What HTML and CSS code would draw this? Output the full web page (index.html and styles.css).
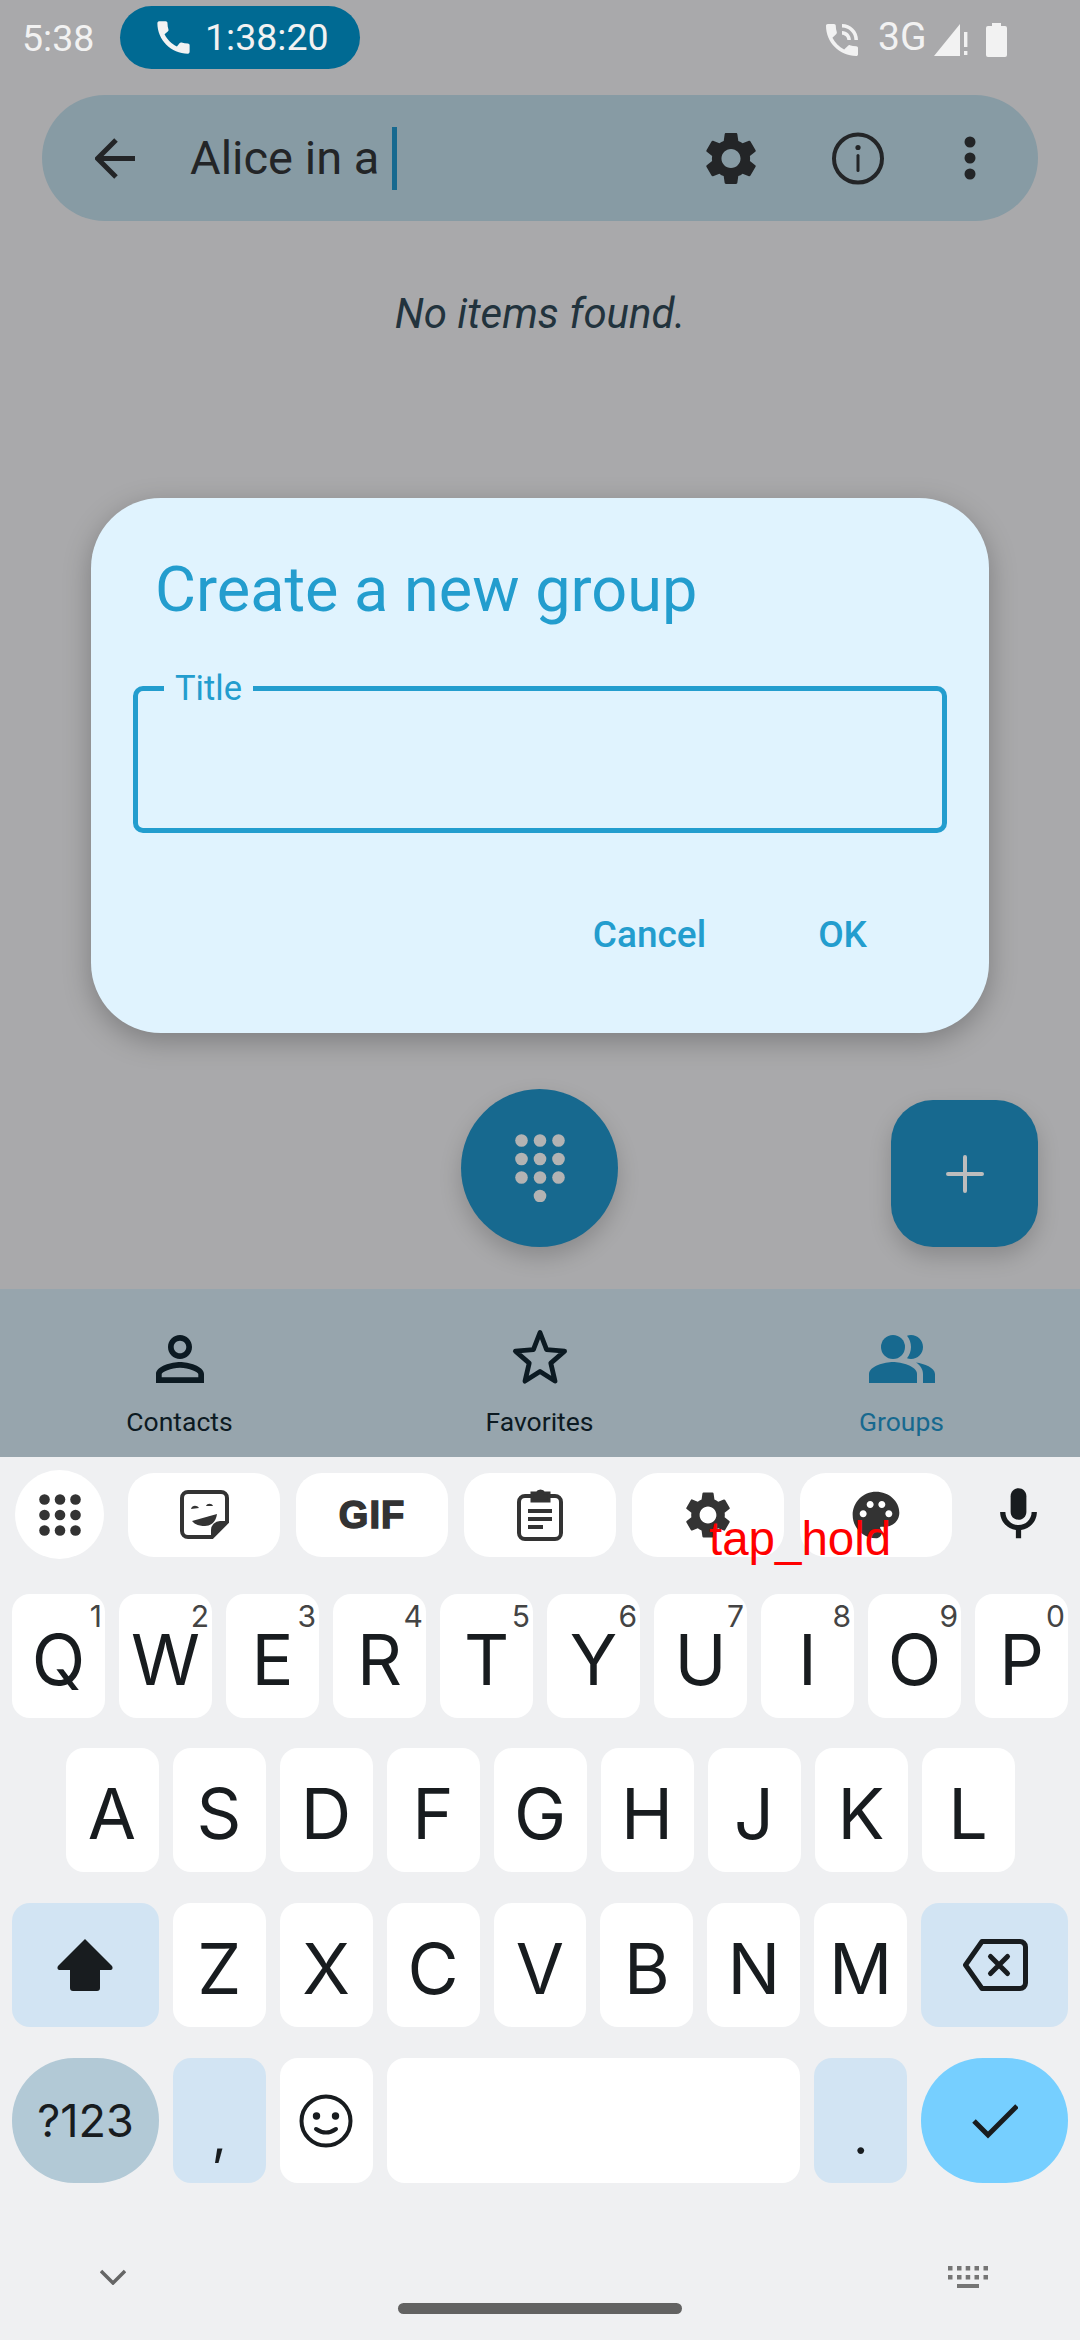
FILE: index.html
```html
<!DOCTYPE html>
<html lang="en">
<head>
<meta charset="utf-8">
<title>Create a new group</title>
<link rel="stylesheet" href="styles.css">
</head>
<body>
<div class="screen">
  <div class="app">
    <div class="status">
      <span class="clock">5:38</span>
      <div class="call-pill">
        <svg class="call-icon" viewBox="0 0 24 24"><path d="M20.01 15.38c-1.23 0-2.42-.2-3.53-.56-.35-.12-.74-.03-1.01.24l-1.57 1.97c-2.83-1.35-5.48-3.9-6.89-6.83l1.95-1.66c.27-.28.35-.67.24-1.02-.37-1.11-.56-2.3-.56-3.53 0-.54-.45-.99-.99-.99H4.19C3.65 3 3 3.24 3 3.99 3 13.28 10.73 21 20.01 21c.71 0 .99-.63.99-1.18v-3.45c0-.54-.45-.99-.99-.99z"/></svg>
        <span>1:38:20</span>
      </div>
      <div class="status-right">
        <svg class="st-phone" viewBox="3 3 18 18"><path d="M15 12h2c0-2.76-2.24-5-5-5v2c1.66 0 3 1.34 3 3zm4 0h2c0-4.97-4.03-9-9-9v2c3.87 0 7 3.13 7 7zm1 3.5c-1.25 0-2.45-.2-3.57-.57-.35-.11-.74-.03-1.02.24l-2.2 2.2c-2.83-1.44-5.15-3.75-6.59-6.59l2.2-2.21c.28-.26.36-.65.25-1C8.7 6.45 8.5 5.25 8.5 4c0-.55-.45-1-1-1H4c-.55 0-1 .45-1 1 0 9.39 7.61 17 17 17 .55 0 1-.45 1-1v-3.5c0-.55-.45-1-1-1z"/></svg>
        <span class="st-net">3G</span>
        <svg class="st-signal" viewBox="0 0 34 32"><path d="M26 0V32H0z"/><rect x="30" y="8" width="3.4" height="15"/><rect x="30" y="27" width="3.4" height="4"/></svg>
        <svg class="st-battery" viewBox="0 0 21 34"><path d="M6 0h9v3h4a2 2 0 0 1 2 2v27a2 2 0 0 1-2 2H2a2 2 0 0 1-2-2V5a2 2 0 0 1 2-2h4z"/></svg>
      </div>
    </div>

    <div class="search">
      <svg class="back" viewBox="0 0 41 41"><path d="M40 20.500H3M21 2 2.500 20.500 21 39"/></svg>
      <span class="query">Alice in a</span><span class="caret"></span>
      <span class="grow"></span>
      <svg class="gear" viewBox="2.400 2 19.200 20"><path d="M19.140 12.940c.04-.3.06-.61.06-.94 0-.32-.02-.64-.07-.94l2.030-1.580c.18-.14.23-.41.12-.61l-1.920-3.320c-.12-.22-.37-.29-.59-.22l-2.390.96c-.5-.38-1.030-.7-1.620-.94l-.36-2.540c-.04-.24-.24-.41-.48-.41h-3.840c-.24 0-.43.17-.47.41l-.36 2.540c-.59.24-1.130.57-1.620.94l-2.390-.96c-.22-.08-.47 0-.59.22L2.740 8.870c-.12.21-.08.47.12.61l2.030 1.580c-.05.3-.09.63-.09.94s.02.64.07.94l-2.030 1.580c-.18.14-.23.41-.12.61l1.920 3.320c.12.22.37.29.59.22l2.390-.96c.5.38 1.030.7 1.620.94l.36 2.540c.05.24.24.41.48.41h3.840c.24 0 .44-.17.47-.41l.36-2.540c.59-.24 1.130-.56 1.620-.94l2.390.96c.22.08.47 0 .59-.22l1.920-3.320c.12-.22.07-.47-.12-.61l-2.010-1.580zM12 15.600c-1.980 0-3.600-1.620-3.600-3.600s1.620-3.600 3.600-3.600 3.600 1.620 3.600 3.600-1.620 3.600-3.600 3.600z"/></svg>
      <svg class="info" viewBox="0 0 52 53"><circle cx="26" cy="26.500" r="24" fill="none" stroke="#232527" stroke-width="4"/><circle cx="26" cy="15.500" r="2.600"/><rect x="24.500" y="22" width="3" height="18" rx="1.500"/></svg>
      <svg class="more" viewBox="0 0 12 44"><circle cx="6" cy="6" r="5.500"/><circle cx="6" cy="22" r="5.500"/><circle cx="6" cy="38" r="5.500"/></svg>
    </div>

    <p class="empty">No items found.</p>

    <div class="fabs">
      <div class="fab fab-round">
        <svg class="dial" viewBox="0 0 50 68"><g fill="#b3b3b3"><circle cx="6.500" cy="6.500" r="6.300"/><circle cx="25" cy="6.500" r="6.300"/><circle cx="43.500" cy="6.500" r="6.300"/><circle cx="6.500" cy="25" r="6.300"/><circle cx="25" cy="25" r="6.300"/><circle cx="43.500" cy="25" r="6.300"/><circle cx="6.500" cy="43.500" r="6.300"/><circle cx="25" cy="43.500" r="6.300"/><circle cx="43.500" cy="43.500" r="6.300"/><circle cx="25" cy="62" r="6.300"/></g></svg>
      </div>
      <div class="fab fab-square">
        <svg class="plus" viewBox="0 0 38 38"><path d="M19 2V36M2 19H36"/></svg>
      </div>
    </div>

    <nav class="tabs">
      <div class="tab">
        <svg class="tab-icon" viewBox="0 0 24 24"><path d="M12 5.900c1.160 0 2.100.94 2.100 2.100s-.94 2.100-2.100 2.100S9.900 9.160 9.900 8s.94-2.100 2.100-2.100m0 9c2.970 0 6.100 1.460 6.100 2.100v1.100H5.900V17c0-.64 3.130-2.100 6.100-2.100M12 4C9.790 4 8 5.790 8 8s1.790 4 4 4 4-1.790 4-4-1.790-4-4-4zm0 9c-2.670 0-8 1.340-8 4v3h16v-3c0-2.660-5.330-4-8-4z"/></svg>
        <span>Contacts</span>
      </div>
      <div class="tab">
        <svg class="tab-icon star" viewBox="0 0 24 24"><path d="M12 3.500 14.200 9.200 20.200 9.700 15.600 13.700 17 19.700 12 16.500 7 19.700 8.400 13.700 3.800 9.700 9.800 9.200z"/></svg>
        <span>Favorites</span>
      </div>
      <div class="tab tab-on">
        <svg class="tab-icon" viewBox="0 0 24 24"><path d="M16.670 13.130C18.040 14.060 19 15.320 19 17v3h4v-3c0-2.180-3.570-3.470-6.330-3.870z"/><path d="M15 12c2.210 0 4-1.790 4-4s-1.790-4-4-4c-.47 0-.91.1-1.330.24C14.500 5.270 15 6.580 15 8s-.5 2.730-1.330 3.760c.42.14.86.24 1.330.24z"/><circle cx="9" cy="8" r="4"/><path d="M9 13c-2.670 0-8 1.340-8 4v3h16v-3c0-2.660-5.330-4-8-4z"/></svg>
        <span>Groups</span>
      </div>
    </nav>

    <div class="dialog">
      <h1 class="dialog-title">Create a new group</h1>
      <fieldset class="field"><legend>Title</legend></fieldset>
      <div class="actions"><span>Cancel</span><span>OK</span></div>
    </div>
  </div>

  <div class="keyboard">
    <div class="toolbar">
      <div class="tool-round">
        <svg class="grid9" viewBox="0 0 42 42"><g fill="#333"><circle cx="5.500" cy="5.500" r="5.300"/><circle cx="21" cy="5.500" r="5.300"/><circle cx="36.500" cy="5.500" r="5.300"/><circle cx="5.500" cy="21" r="5.300"/><circle cx="21" cy="21" r="5.300"/><circle cx="36.500" cy="21" r="5.300"/><circle cx="5.500" cy="36.500" r="5.300"/><circle cx="21" cy="36.500" r="5.300"/><circle cx="36.500" cy="36.500" r="5.300"/></g></svg>
      </div>
      <div class="chip">
        <svg class="ic-sticker" viewBox="0 0 49 49"><path d="M8 2h33a6 6 0 0 1 6 6v24L32 47H8a6 6 0 0 1-6-6V8a6 6 0 0 1 6-6z" fill="none" stroke="#333" stroke-width="4"/><path d="M47 31h-7a9 9 0 0 0-9 9v7z" fill="#333"/><path d="M11 19c1-4 6-4 8-1z M26 16c1-3 6-3 7 0z M12 31l25-7c-1 8-6 12-12 12-5 0-10-1-13-5z" fill="#333"/></svg>
      </div>
      <div class="chip"><span class="gif">GIF</span></div>
      <div class="chip">
        <svg class="ic-clip" viewBox="0 0 46 52"><path d="M8 7h30a6 6 0 0 1 6 6v31a6 6 0 0 1-6 6H8a6 6 0 0 1-6-6V13a6 6 0 0 1 6-6z" fill="none" stroke="#333" stroke-width="4"/><path d="M15 4h5a4 4 0 0 1 7 0h5v8H15z" fill="#333" stroke="#333" stroke-width="3"/><rect x="11" y="20" width="24" height="4" fill="#333"/><rect x="11" y="28" width="24" height="4" fill="#333"/><rect x="11" y="36" width="15" height="4" fill="#333"/></svg>
      </div>
      <div class="chip">
        <svg class="ic-settings" viewBox="0 0 24 24"><path d="M19.140 12.940c.04-.3.06-.61.06-.94 0-.32-.02-.64-.07-.94l2.030-1.580c.18-.14.23-.41.12-.61l-1.920-3.320c-.12-.22-.37-.29-.59-.22l-2.390.96c-.5-.38-1.030-.7-1.620-.94l-.36-2.540c-.04-.24-.24-.41-.48-.41h-3.840c-.24 0-.43.17-.47.41l-.36 2.540c-.59.24-1.130.57-1.620.94l-2.390-.96c-.22-.08-.47 0-.59.22L2.740 8.870c-.12.21-.08.47.12.61l2.030 1.580c-.05.3-.09.63-.09.94s.02.64.07.94l-2.030 1.580c-.18.14-.23.41-.12.61l1.920 3.320c.12.22.37.29.59.22l2.390-.96c.5.38 1.030.7 1.620.94l.36 2.540c.05.24.24.41.48.41h3.840c.24 0 .44-.17.47-.41l.36-2.540c.59-.24 1.130-.56 1.620-.94l2.390.96c.22.08.47 0 .59-.22l1.920-3.320c.12-.22.07-.47-.12-.61l-2.010-1.580zM12 15.600c-1.980 0-3.600-1.620-3.600-3.600s1.620-3.600 3.600-3.600 3.600 1.620 3.600 3.600-1.620 3.600-3.600 3.600z"/></svg>
      </div>
      <div class="chip">
        <svg class="ic-settings" viewBox="0 0 24 24"><path d="M12 2C6.490 2 2 6.490 2 12s4.490 10 10 10c1.380 0 2.500-1.120 2.500-2.500 0-.61-.23-1.200-.64-1.670-.08-.1-.13-.21-.13-.33 0-.28.22-.5.5-.5H16c3.310 0 6-2.690 6-6 0-4.960-4.490-9-10-9zm5.500 11c-.83 0-1.500-.67-1.500-1.500s.67-1.500 1.500-1.500 1.500.67 1.500 1.500-.67 1.500-1.500 1.500zm-3-4c-.83 0-1.500-.67-1.500-1.500S13.670 6 14.500 6s1.500.67 1.500 1.500S15.330 9 14.500 9zM5 11.500c0-.83.67-1.500 1.500-1.500s1.500.67 1.500 1.500S7.330 13 6.500 13 5 12.330 5 11.500zm6-4c0 .83-.67 1.500-1.500 1.500S8 8.330 8 7.500 8.670 6 9.500 6s1.500.67 1.500 1.500z"/></svg>
      </div>
      <svg class="ic-mic" viewBox="0 0 24 24"><path d="M12 14c1.660 0 3-1.340 3-3V5c0-1.660-1.340-3-3-3S9 3.340 9 5v6c0 1.660 1.340 3 3 3z"/><path d="M17 11c0 2.760-2.240 5-5 5s-5-2.240-5-5H5c0 3.530 2.610 6.430 6 6.920V21h2v-3.080c3.390-.49 6-3.390 6-6.920h-2z"/></svg>
      <span class="tap-hold">tap_hold</span>
    </div>

    <div class="row row-1">
      <div class="key"><i>1</i>Q</div><div class="key"><i>2</i>W</div><div class="key"><i>3</i>E</div><div class="key"><i>4</i>R</div><div class="key"><i>5</i>T</div><div class="key"><i>6</i>Y</div><div class="key"><i>7</i>U</div><div class="key"><i>8</i>I</div><div class="key"><i>9</i>O</div><div class="key"><i>0</i>P</div>
    </div>
    <div class="row row-2">
      <div class="key">A</div><div class="key">S</div><div class="key">D</div><div class="key">F</div><div class="key">G</div><div class="key">H</div><div class="key">J</div><div class="key">K</div><div class="key">L</div>
    </div>
    <div class="row row-3">
      <div class="key key-wide key-mod">
        <svg class="ic-shift" viewBox="0 0 56 52"><path d="M28 0 55 27q1.500 3-1 4H43v18q0 3-3 3H16q-3 0-3-3V31H2q-2.500-1-1-4z"/></svg>
      </div>
      <div class="key">Z</div><div class="key">X</div><div class="key">C</div><div class="key">V</div><div class="key">B</div><div class="key">N</div><div class="key">M</div>
      <div class="key key-wide key-mod">
        <svg class="ic-del" viewBox="0 0 66 52"><path d="M20 2.500H58a5.500 5.500 0 0 1 5.500 5.500V44a5.500 5.500 0 0 1-5.500 5.500H20L3.500 26z" fill="none" stroke="#181c1f" stroke-width="5" stroke-linejoin="round"/><path d="M28.500 17.500 45.500 34.500M45.500 17.500 28.500 34.500" stroke="#181c1f" stroke-width="5" stroke-linecap="round"/></svg>
      </div>
    </div>
    <div class="row row-4">
      <div class="key key-wide key-sym">?123</div>
      <div class="key key-mod key-punct">,</div>
      <div class="key">
        <svg class="ic-emoji" viewBox="0 0 54 54"><circle cx="27" cy="27" r="24.500" fill="none" stroke="#181c1f" stroke-width="4"/><circle cx="17.500" cy="22" r="3.700" fill="#181c1f"/><circle cx="36.500" cy="22" r="3.700" fill="#181c1f"/><path d="M17 35q10 7 20 0" fill="none" stroke="#181c1f" stroke-width="4" stroke-linecap="round"/></svg>
      </div>
      <div class="key key-space"></div>
      <div class="key key-mod key-punct">.</div>
      <div class="key key-wide key-enter">
        <svg class="ic-check" viewBox="0 0 46 36"><path d="M2 18 16 32 45 3" fill="none" stroke="#181c1f" stroke-width="5"/></svg>
      </div>
    </div>

    <div class="kb-foot">
      <svg class="ic-chev" viewBox="0 0 26 16"><path d="M1 2 13 14 25 2" fill="none" stroke="#666" stroke-width="3.500"/></svg>
      <svg class="ic-kbd" viewBox="0 0 40 22"><g fill="#757575"><rect width="4.500" height="4.500"/><rect x="9" width="4.500" height="4.500"/><rect x="17.700" width="4.500" height="4.500"/><rect x="26.500" width="4.500" height="4.500"/><rect x="35.500" width="4.500" height="4.500"/><rect y="9" width="4.500" height="4.500"/><rect x="9" y="9" width="4.500" height="4.500"/><rect x="17.700" y="9" width="4.500" height="4.500"/><rect x="26.500" y="9" width="4.500" height="4.500"/><rect x="35.500" y="9" width="4.500" height="4.500"/><rect x="9" y="18" width="22" height="4"/></g></svg>
    </div>
    <div class="home"></div>
  </div>
</div>
</body>
</html>
```

FILE: styles.css
```css
* { box-sizing: border-box; }
html, body { margin: 0; padding: 0; }
body { width: 1080px; height: 2340px; overflow: hidden; font-family: Roboto, sans-serif; }
svg { display: block; flex: none; }

.screen { width: 1080px; height: 2340px; display: flex; flex-direction: column; }
.app { position: relative; height: 1457px; display: flex; flex-direction: column; background: #a9a9ab; }

/* status bar */
.status { height: 95px; padding: 6px 73px 0 22px; display: flex; align-items: flex-start; color: #f2f2f2; font-size: 37.500px; }
.clock { line-height: 63px; margin-top: 1px; width: 98px; }
.call-pill { width: 240px; height: 63px; border-radius: 32px; background: #006a93; display: flex; align-items: center; padding-left: 32px; gap: 10px; line-height: 63px; }
.call-icon { width: 43px; height: 43px; fill: #f2f2f2; }
.status-right { margin-left: auto; height: 63px; display: flex; align-items: center; }
.st-phone { width: 32px; height: 32px; fill: #f2f2f2; margin-top: 5px; }
.st-net { margin-left: 20px; width: 56px; line-height: 63px; font-size: 39px; }
.st-signal { width: 34px; height: 32px; fill: #f2f2f2; margin-top: 5px; }
.st-battery { width: 21px; height: 34px; fill: #f2f2f2; margin-left: 18px; margin-top: 4px; }

/* search */
.search { height: 126px; margin: 0 42px; padding: 0 62px 0 53px; border-radius: 63px; background: #879ba4; display: flex; align-items: center; color: #232527; }
.back { width: 41px; height: 41px; fill: none; stroke: #232527; stroke-width: 5; }
.query { margin-left: 54px; font-size: 47px; line-height: 56px; }
.caret { width: 5px; height: 63px; margin-left: 13px; background: #17698f; }
.grow { flex: 1; }
.gear { width: 52px; height: 53px; fill: #232527; margin-right: 1px; }
.info { width: 52px; height: 53px; margin-left: 74px; fill: #232527; }
.more { width: 12px; height: 44px; margin-left: 80px; fill: #232527; }

.empty { margin: 68px 0 0; font-size: 42px; line-height: 50px; font-style: italic; font-weight: 400; text-align: center; color: #22333d; }

/* floating buttons */
.fabs { flex: 1; display: flex; justify-content: flex-end; align-items: flex-end; gap: 273px; padding: 0 42px 42px 0; }
.fab { display: flex; align-items: center; justify-content: center; background: #17698f; box-shadow: 0 10px 22px rgba(0, 0, 0, .18); }
.fab-round { width: 157px; height: 158px; border-radius: 50%; }
.fab-square { width: 147px; height: 147px; border-radius: 42px; }
.dial { width: 50px; height: 68px; }
.plus { width: 38px; height: 38px; fill: none; stroke: #bdbdbd; stroke-width: 4; stroke-linecap: round; }

/* bottom tabs */
.tabs { height: 168px; background: #97a5ad; display: grid; grid-template-columns: 359px 361px 360px; color: #0c1a22; }
.tab { display: flex; flex-direction: column; align-items: center; padding-top: 34px; font-size: 26.500px; line-height: 32px; }
.tab span { margin-top: 11px; }
.tab-icon { width: 72px; height: 72px; fill: #0c1a22; }
.star { fill: none; stroke: #0c1a22; stroke-width: 1.600; stroke-linejoin: round; margin-top: -1px; margin-bottom: 1px; }
.tab-on { color: #17698f; padding-left: 3px; }
.tab-on .tab-icon { fill: #17698f; }

/* dialog */
.dialog { position: absolute; left: 91px; top: 498px; width: 898px; height: 535px; border-radius: 70px; background: #e0f3fe; box-shadow: 0 8px 28px rgba(0, 0, 0, .26); padding-top: 57px; color: #239dce; }
.dialog-title { margin: 0 0 0 64px; font-size: 63px; line-height: 70px; font-weight: 400; }
.field { display: block; margin: 45px 42px 0 42px; padding: 0 0 0 26px; height: 163px; border: 5px solid #239dce; border-radius: 10px; min-width: 0; }
.field legend { padding: 0 11px; font-size: 34.500px; line-height: 36px; }
.actions { display: flex; justify-content: flex-end; gap: 112px; padding-right: 122px; margin-top: 81px; font-size: 37px; line-height: 42px; font-weight: 500; }

/* keyboard */
.keyboard { flex: 1; background: #eff0f2; padding: 13px 12px 0; display: flex; flex-direction: column; font-family: Inter, sans-serif; color: #181c1f; }
.toolbar { position: relative; height: 89px; display: flex; align-items: center; gap: 16px; padding-left: 3px; }
.tool-round { width: 89px; height: 89px; margin-right: 8px; border-radius: 50%; background: #fff; display: flex; align-items: center; justify-content: center; }
.grid9 { width: 42px; height: 42px; }
.chip { width: 152px; height: 84px; border-radius: 26px; background: #fff; display: flex; align-items: center; justify-content: center; }
.ic-sticker { width: 49px; height: 49px; }
.gif { font-family: "Liberation Sans", sans-serif; font-weight: 700; font-size: 38px; line-height: 44px; color: #333; -webkit-text-stroke: 1.500px #333; letter-spacing: 1px; }
.ic-clip { width: 46px; height: 52px; }
.ic-settings { width: 56px; height: 56px; fill: #333; }
.ic-mic { width: 63px; height: 63px; margin-left: 19px; fill: #181c1f; }
.tap-hold { position: absolute; left: 697px; top: 42px; font-family: "Liberation Sans", sans-serif; font-size: 47.500px; line-height: 54px; color: #f00; }

.row { display: flex; gap: 14px; height: 124px; }
.row-1 { margin-top: 35px; }
.row-2 { margin-top: 30px; justify-content: center; }
.row-3 { margin-top: 31px; }
.row-4 { margin-top: 31px; height: 125px; }
.key { position: relative; width: 93px; border-radius: 18px; background: #fff; display: flex; align-items: center; justify-content: center; padding-top: 7px; font-size: 70px; line-height: 80px; }
.key i { position: absolute; right: 3px; top: 4px; font-style: normal; font-size: 30px; line-height: 36px; color: #444; }
.key-wide { width: 147px; }
.key-mod { background: #d2e4f3; }
.key-sym { background: #b2c9d6; border-radius: 62px; font-size: 45px; padding-top: 0; }
.key-enter { background: #76cfff; border-radius: 62px; padding-top: 0; }
.key-space { width: 414px; }
.key-punct { font-size: 52px; align-items: flex-end; padding: 0 0 17px; line-height: 60px; }
.ic-shift { width: 56px; height: 52px; margin-top: -7px; fill: #181c1f; }
.ic-del { width: 66px; height: 52px; margin-top: -7px; }
.ic-emoji { width: 54px; height: 54px; margin-top: -7px; }
.ic-check { width: 46px; height: 36px; }

.kb-foot { margin-top: 79px; height: 30px; padding: 0 80px 0 88px; display: flex; align-items: center; justify-content: space-between; }
.ic-chev { width: 26px; height: 16px; }
.ic-kbd { width: 40px; height: 22px; }
.home { width: 284px; height: 11px; margin: 11px auto 0; border-radius: 6px; background: #626262; }
```
